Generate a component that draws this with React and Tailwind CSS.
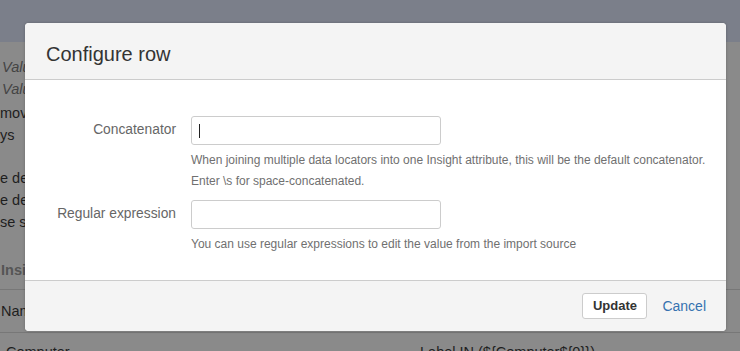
import React from "react";

export default function App() {
  const font = { fontFamily: '"Liberation Sans", Arial, sans-serif' };
  return (
    <div
      className="relative w-[740px] h-[351px] overflow-hidden bg-[#8a8a8a]"
      style={font}
    >
      {/* dimmed background page */}
      <div className="flex flex-col">
        <div className="h-[42px] bg-[#7b7f8a]" />
        <div className="flex flex-col text-[14.5px] leading-[22px] text-[#1e1e1e] mt-[14px]">
          <div className="italic text-[#444] pl-[2px]">Value</div>
          <div className="italic text-[#444] pl-[2px]">Value</div>
          <div className="mt-[2px]">move</div>
          <div>ys</div>
          <div className="mt-[21px]">e def</div>
          <div>e def</div>
          <div>se se</div>
          <div className="mt-[26px] font-bold text-[#555] pl-[1px]">Insig</div>
          <div className="mt-[8px] border-t border-[#777] h-[43px] flex items-center">
            <span className="pl-[1px]">Name</span>
          </div>
          <div className="border-t border-[#777] pt-[8px] flex">
            <span className="pl-[6px] w-[420px]">Computer</span>
            <span>Label IN (${"{"}Computer${"{"}0{"}"}{"}"})</span>
          </div>
        </div>
      </div>

      {/* modal */}
      <div className="absolute left-[25px] top-[23px] w-[701px] rounded-[4px] overflow-hidden bg-white shadow-[0_0_3px_rgba(0,0,0,0.25)] flex flex-col">
        <div className="h-[57px] bg-[#f4f4f4] border-b border-[#cccccc] pl-[21px] pt-[19px]">
          <h2 className="text-[20px] leading-[24px] text-[#333333] font-normal">
            Configure row
          </h2>
        </div>

        <div className="h-[200px] bg-white pt-[36px] flex flex-col">
          <div className="flex items-center">
            <label className="w-[151px] text-right text-[13.8px] text-[#666666]">
              Concatenator
            </label>
            <div className="ml-[15px] w-[250px] h-[29px] border border-[#cccccc] rounded-[3px] bg-white flex items-center pl-[7px]">
              <span className="w-[1px] h-[14px] bg-[#222]" />
            </div>
          </div>
          <div className="ml-[166px] mt-[5px] text-[12px] leading-[21px] text-[#707070]">
            <div>
              When joining multiple data locators into one Insight attribute, this will be the default concatenator.
            </div>
            <div>Enter \s for space-concatenated.</div>
          </div>

          <div className="flex items-center mt-[8px]">
            <label className="w-[151px] text-right text-[13.8px] text-[#666666]">
              Regular expression
            </label>
            <div className="ml-[15px] w-[250px] h-[29px] border border-[#cccccc] rounded-[3px] bg-white" />
          </div>
          <div className="ml-[166px] mt-[5px] text-[12px] leading-[21px] text-[#707070]">
            You can use regular expressions to edit the value from the import source
          </div>
        </div>

        <div className="h-[51px] bg-[#f4f4f4] border-t border-[#cccccc] flex items-center justify-end pr-[20px]">
          <button className="w-[65px] h-[26px] bg-white border border-[#cccccc] rounded-[3px] text-[13px] font-bold text-[#333333]">
            Update
          </button>
          <a className="ml-[15px] text-[14px] text-[#3572b0]">Cancel</a>
        </div>
      </div>
    </div>
  );
}
